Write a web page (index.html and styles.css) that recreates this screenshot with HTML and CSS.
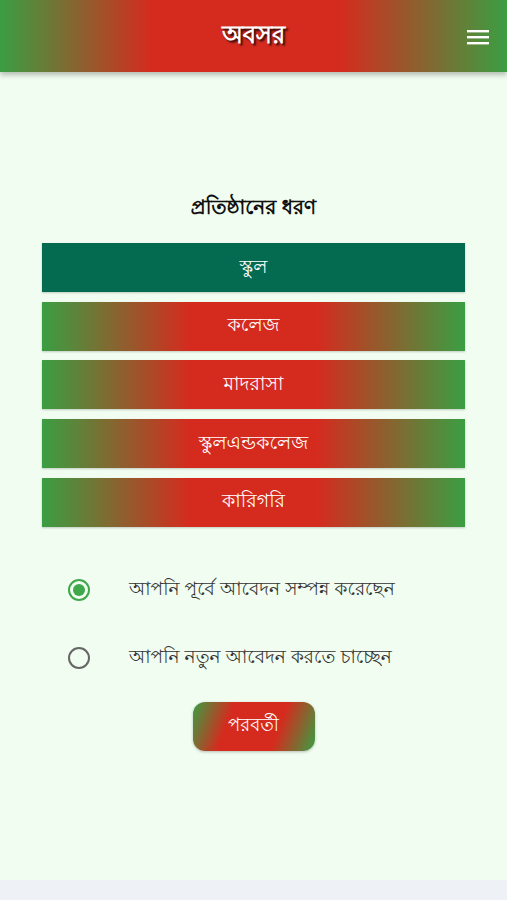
FILE: index.html
```html
<!DOCTYPE html>
<html lang="bn">
<head>
<meta charset="utf-8">
<link rel="stylesheet" href="styles.css">
</head>
<body>
<header class="topbar">
  <div class="brand">অবসর</div>
  <button class="menu" aria-label="menu">
    <svg width="22" height="16" viewBox="0 0 22 16"><rect x="0" y="1" width="22" height="2.4" fill="#fff"/><rect x="0" y="7" width="22" height="2.4" fill="#fff"/><rect x="0" y="13" width="22" height="2.4" fill="#fff"/></svg>
  </button>
</header>
<main class="content">
  <h2 class="title">প্রতিষ্ঠানের ধরণ</h2>
  <div class="types">
    <div class="type active">স্কুল</div>
    <div class="type">কলেজ</div>
    <div class="type">মাদরাসা</div>
    <div class="type">স্কুলএন্ডকলেজ</div>
    <div class="type">কারিগরি</div>
  </div>
  <div class="options">
    <label class="option"><span class="radio checked"></span><span>আপনি পূর্বে আবেদন সম্পন্ন করেছেন</span></label>
    <label class="option"><span class="radio"></span><span>আপনি নতুন আবেদন করতে চাচ্ছেন</span></label>
  </div>
  <div class="actions"><button class="next">পরবর্তী</button></div>
</main>
<footer class="bottom"></footer>
</body>
</html>
```
FILE: styles.css
```css
* { box-sizing: border-box; }
html, body { margin: 0; padding: 0; }
body {
  width: 507px;
  height: 900px;
  background: #f1fdf0;
  font-family: "Lohit Bengali", "Noto Serif Bengali", sans-serif;
  display: flex;
  flex-direction: column;
  overflow: hidden;
}
.topbar {
  height: 72px;
  flex: none;
  display: flex;
  align-items: center;
  justify-content: center;
  position: relative;
  background: linear-gradient(90deg, #3a9e42 0%, #d52b1e 30%, #d52b1e 67%, #3a9e42 100%);
  box-shadow: 0 3px 5px rgba(0,0,0,0.25);
  z-index: 1;
}
.brand {
  color: #fff;
  font-size: 24px;
  font-weight: 700;
  line-height: 30px;
  text-shadow: 2px 2px 2px rgba(0,0,0,0.8);
}
.menu {
  position: absolute;
  right: 18px;
  top: 29px;
  background: none;
  border: 0;
  padding: 0;
  line-height: 0;
}
.content {
  flex: 1;
  padding: 0 42px;
  display: flex;
  flex-direction: column;
}
.title {
  margin: 118px 0 0;
  text-align: center;
  font-size: 20px;
  font-weight: 700;
  color: #111;
  line-height: 36px;
}
.types {
  margin-top: 17px;
  display: flex;
  flex-direction: column;
  gap: 9.7px;
}
.type {
  height: 49px;
  display: flex;
  align-items: center;
  justify-content: center;
  color: #fff;
  font-size: 19px;
  line-height: 24px;
  background: linear-gradient(90deg, #3a9e42 0%, #d52b1e 35%, #d52b1e 65%, #3a9e42 100%);
  box-shadow: 0 1px 2px rgba(0,0,0,0.2);
}
.type.active { background: #046a50; }
.options {
  margin-top: 48px;
  display: flex;
  flex-direction: column;
  gap: 38px;
  padding-left: 26px;
}
.option {
  display: flex;
  align-items: center;
  gap: 39px;
  font-size: 18.5px;
  line-height: 24px;
  color: #333;
  height: 30px;
}
.radio {
  width: 22px;
  height: 22px;
  border-radius: 50%;
  border: 2px solid #666;
  flex: none;
  position: relative;
}
.radio.checked { border-color: #3ea84a; }
.radio.checked::after {
  content: "";
  position: absolute;
  left: 3px; top: 3px;
  width: 12px; height: 12px;
  border-radius: 50%;
  background: #3ea84a;
}
.actions {
  margin-top: 29px;
  display: flex;
  justify-content: center;
}
.next {
  width: 122px;
  height: 49px;
  border: 0;
  border-radius: 12px;
  color: #fff;
  font-family: inherit;
  font-size: 18px;
  background: linear-gradient(110deg, #3a9e42 0%, #d52b1e 30%, #d52b1e 68%, #3a9e42 100%);
  box-shadow: 0 1px 3px rgba(0,0,0,0.25);
}
.bottom {
  height: 20px;
  flex: none;
  background: #eef2f7;
}
```
